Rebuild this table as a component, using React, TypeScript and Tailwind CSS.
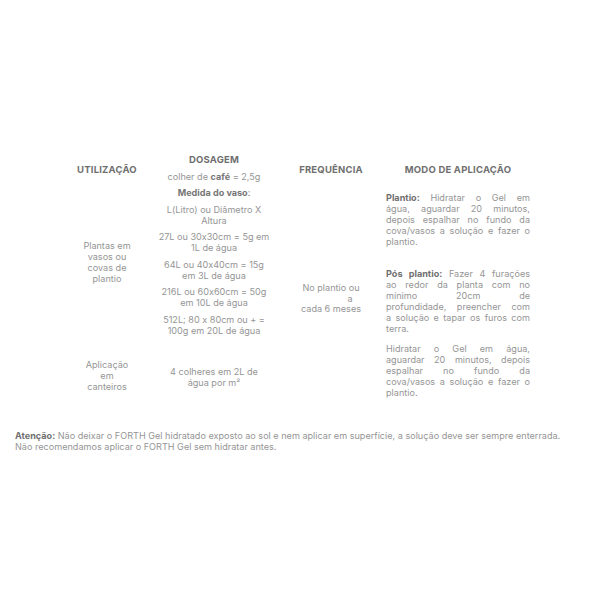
import React from 'react'

type Line = { b?: string; t: string }

const modo: Line[][] = [
  [
    { b: 'Plantio:', t: ' Hidratar o Gel em' },
    { t: 'água, aguardar 20 minutos,' },
    { t: 'depois espalhar no fundo da' },
    { t: 'cova/vasos a solução e fazer o' },
    { t: 'plantio.' },
  ],
  [
    { b: 'Pós plantio:', t: ' Fazer 4 furações' },
    { t: 'ao redor da planta com no' },
    { t: 'mínimo 20cm de' },
    { t: 'profundidade, preencher com' },
    { t: 'a solução e tapar os furos com' },
    { t: 'terra.' },
  ],
  [
    { t: 'Hidratar o Gel em água,' },
    { t: 'aguardar 20 minutos, depois' },
    { t: 'espalhar no fundo da' },
    { t: 'cova/vasos a solução e fazer o' },
    { t: 'plantio.' },
  ],
]

const vasos = [
  ['L(Litro) ou Diâmetro X', 'Altura'],
  ['27L ou 30x30cm = 5g em', '1L de água'],
  ['64L ou 40x40cm = 15g', 'em 3L de água'],
  ['216L ou 60x60cm = 50g', 'em 10L de água'],
  ['512L; 80 x 80cm ou + =', '100g em 20L de água'],
]

function Lines({ lines }: { lines: string[] }) {
  return (
    <div className="flex flex-col">
      {lines.map((l, i) => (
        <span key={i} className="whitespace-nowrap">{l}</span>
      ))}
    </div>
  )
}

function Head({ children }: { children: React.ReactNode }) {
  return <p className="font-bold text-[9.5px] text-[#6f6f6f] tracking-[0.2px]">{children}</p>
}

export default function App() {
  return (
    <div
      className="w-[600px] h-[600px] bg-white text-[9.1px] leading-[11px] text-[#959595] [font-feature-settings:'calt'_0]"
      style={{ fontFamily: 'Inter, "Open Sans", sans-serif' }}
    >
      <div className="pt-[150px] pl-[62px]">
        <div className="grid grid-cols-[90px_124px_110px_144px] grid-rows-[36px_151px_77px] text-center">
          {/* header */}
          <div className="flex items-center justify-center pt-[2px]">
            <Head>UTILIZAÇÃO</Head>
          </div>
          <div className="flex flex-col items-center justify-center gap-[6px]">
            <Head>DOSAGEM</Head>
            <p>
              colher de <b className="text-[#777]">café</b> = 2,5g
            </p>
          </div>
          <div className="flex items-center justify-center pt-[2px]">
            <Head>FREQUÊNCIA</Head>
          </div>
          <div className="flex items-center justify-center pt-[2px]">
            <Head>MODO DE APLICAÇÃO</Head>
          </div>

          {/* row 1 */}
          <div className="flex items-center justify-center col-start-1 row-start-2">
            <Lines lines={['Plantas em', 'vasos ou', 'covas de', 'plantio']} />
          </div>
          <div className="flex flex-col items-center justify-center gap-[5.5px] col-start-2 row-start-2">
            <p className="font-bold text-[#777]">
              Medida do vaso<span className="font-normal">:</span>
            </p>
            {vasos.map((v, i) => (
              <Lines key={i} lines={v} />
            ))}
          </div>

          {/* frequencia */}
          <div className="flex items-center justify-center col-start-3 row-start-2 row-span-2 pb-[2px]">
            <div className="flex flex-col items-center leading-[10.5px]">
              <span>No plantio ou</span>
              <span className="pl-[38px]">a</span>
              <span>cada 6 meses</span>
            </div>
          </div>

          {/* modo */}
          <div className="col-start-4 row-start-2 row-span-2 pt-[5.5px] flex flex-col text-left">
            {modo.map((p, i) => (
              <div key={i} className={i === 0 ? 'mb-[21px]' : 'mb-[9px]'}>
                {p.map((l, j) => (
                  <div
                    key={j}
                    className={
                      j < p.length - 1
                        ? 'whitespace-nowrap text-justify [text-align-last:justify]'
                        : 'whitespace-nowrap'
                    }
                  >
                    {l.b && <b className="text-[#6f6f6f]">{l.b}</b>}
                    {l.t}
                  </div>
                ))}
              </div>
            ))}
          </div>

          {/* row 2 */}
          <div className="flex items-center justify-center col-start-1 row-start-3">
            <Lines lines={['Aplicação', 'em', 'canteiros']} />
          </div>
          <div className="flex items-center justify-center col-start-2 row-start-3 pt-[2px]">
            <Lines lines={['4 colheres em 2L de', 'água por m²']} />
          </div>
        </div>
      </div>

      {/* nota */}
      <div className="pt-[16px] pl-[15px]">
        <p className="whitespace-nowrap">
          <b className="text-[#6f6f6f]">Atenção:</b> Não deixar o FORTH Gel hidratado exposto ao sol e nem aplicar em
          superfície, a solução deve ser sempre enterrada.
        </p>
        <p className="whitespace-nowrap">Não recomendamos aplicar o FORTH Gel sem hidratar antes.</p>
      </div>
    </div>
  )
}
